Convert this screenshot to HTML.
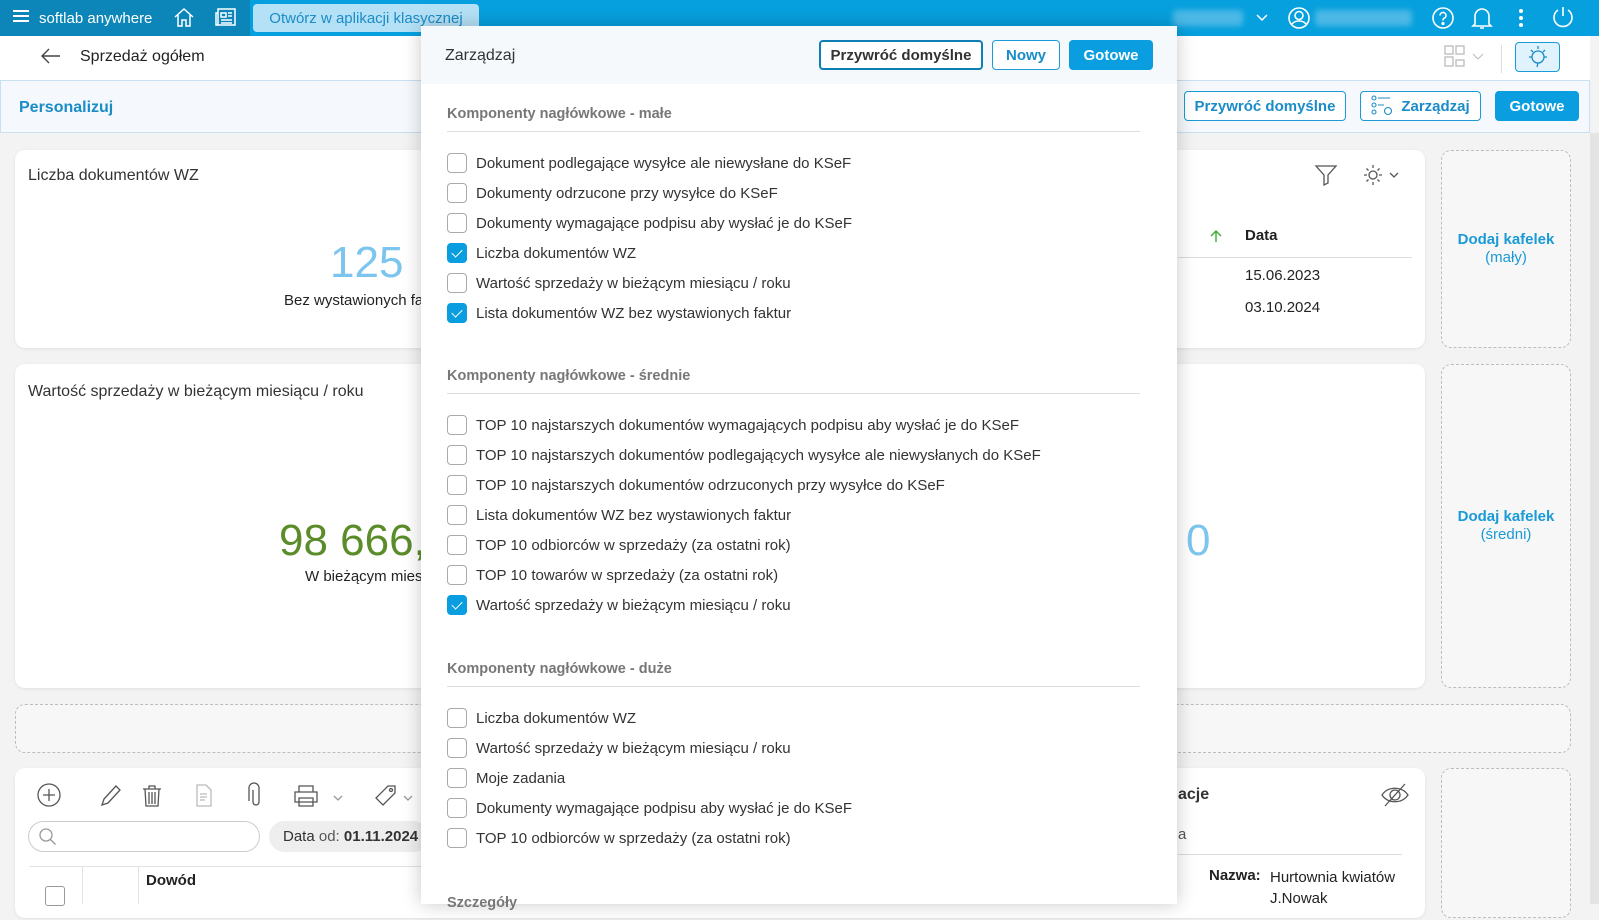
<!DOCTYPE html>
<html><head><meta charset="utf-8"><style>
*{box-sizing:border-box;margin:0;padding:0}
body{width:1599px;height:904px;overflow:hidden;position:relative;background:#f3f3f3;font-family:"Liberation Sans",sans-serif;color:#222;font-size:15px}
.a{position:absolute}
.top{left:0;top:0;width:1599px;height:36px;background:#06a0de}
.topl{left:0;top:0;width:250px;height:36px;background:#0c86b8}
.bar2{left:0;top:36px;width:1590px;height:44px;background:#fff}
.pers{left:0;top:80px;width:1590px;height:53px;background:#f5f9fd;border:1px solid #c8e0f2}
.btn{position:absolute;border:1px solid #1a9ad6;border-radius:4px;color:#1a8cc8;font-weight:bold;font-size:15px;display:flex;align-items:center;justify-content:center;background:#fff}
.btnf{background:#0a9ee0;color:#fff;border-color:#0a9ee0}
.card{position:absolute;background:#fff;border-radius:10px;box-shadow:0 1px 3px rgba(0,0,0,.08)}
.dash{position:absolute;border:1px dashed #bdbdbd;border-radius:10px;background:#f7f7f7}
.dk{color:#1a9ad6;font-weight:bold;text-align:center;font-size:15px;line-height:18px}
.modal{left:421px;top:26px;width:756px;height:878px;background:#fff;box-shadow:0 0 18px rgba(0,0,0,.22)}
.mh{left:0;top:0;width:756px;height:58px;background:#f5f9fc}
.sec{position:absolute;left:26px;width:693px;color:#777;font-weight:bold;font-size:14.5px;border-bottom:1px solid #ddd;padding-bottom:9px}
.it{position:absolute;left:26px;height:20px;display:flex;align-items:center;font-size:15px;color:#333}
.cb{width:20px;height:20px;border:1px solid #aaa;border-radius:4px;margin-right:9px;background:#fff;position:relative}
.cb.on{background:#0a9ee0;border-color:#0a9ee0}
.cb.on:after{content:"";position:absolute;left:6px;top:3px;width:5px;height:9px;border:solid #fff;border-width:0 1.5px 1.5px 0;transform:rotate(45deg)}
</style></head><body>
<div class="a top"></div><div class="a topl"></div>
<div class="a" style="left:13px;top:10px;width:16px;height:2px;background:#fff;box-shadow:0 5px 0 #fff,0 10px 0 #fff"></div>
<div class="a" style="left:39px;top:10px;color:#fff;font-size:15px">softlab anywhere</div>
<svg class="a" style="left:173px;top:6px" width="22" height="22" viewBox="0 0 22 22" fill="none" stroke="#fff" stroke-width="1.5"><path d="M2 11L11 3l9 8M5 9v11h4v-6h4v6h4V9"/></svg>
<svg class="a" style="left:215px;top:8px" width="22" height="19" viewBox="0 0 22 19" fill="none" stroke="#fff" stroke-width="1.5"><rect x="3" y="1" width="17" height="16"/><path d="M3 5H1v12h2M6 5h5v4H6zM13 5h4M13 8h4M6 12h11M6 15h11"/></svg>
<div class="a" style="left:253px;top:4px;width:226px;height:28px;background:#b5e1f6;border-radius:4px;color:#1a8cc8;font-size:15px;display:flex;align-items:center;justify-content:center">Otwórz w aplikacji klasycznej</div>
<div class="a" style="left:1173px;top:10px;width:70px;height:16px;background:#4cb8e6;border-radius:4px;filter:blur(3px)"></div>
<svg class="a" style="left:1255px;top:12px" width="14" height="10"><path d="M2 3l5 5 5-5" stroke="#fff" fill="none" stroke-width="1.5"/></svg>
<svg class="a" style="left:1287px;top:6px" width="24" height="24" fill="none" stroke="#fff" stroke-width="1.6"><circle cx="12" cy="12" r="10"/><circle cx="12" cy="9.5" r="4"/><path d="M5 18c3-4 11-4 14 0"/></svg>
<div class="a" style="left:1315px;top:10px;width:97px;height:16px;background:#4cb8e6;border-radius:4px;filter:blur(3px)"></div>
<svg class="a" style="left:1431px;top:6px" width="24" height="24" fill="none" stroke="#fff" stroke-width="1.6"><circle cx="12" cy="12" r="10"/><path d="M9 9.5a3 3 0 1 1 4 2.8c-1 .5-1 1-1 2.2"/><circle cx="12" cy="17.5" r=".8" fill="#fff"/></svg>
<svg class="a" style="left:1470px;top:5px" width="24" height="26" fill="none" stroke="#fff" stroke-width="1.6"><path d="M5 19V11a7 7 0 0 1 14 0v8l2 2H3zM10 23h4"/></svg>
<div class="a" style="left:1519px;top:9px;width:4px;height:4px;border-radius:2px;background:#fff;box-shadow:0 7px 0 #fff,0 14px 0 #fff"></div>
<svg class="a" style="left:1551px;top:5px" width="24" height="24" fill="none" stroke="#fff" stroke-width="1.6"><path d="M7 5a9 9 0 1 0 10 0M12 2v9"/></svg>

<div class="a bar2"></div>
<svg class="a" style="left:40px;top:48px" width="22" height="16" fill="none" stroke="#444" stroke-width="1.4"><path d="M20 8H2M9 1L2 8l7 7"/></svg>
<div class="a" style="left:80px;top:48px;font-size:16px;color:#222">Sprzedaż ogółem</div>
<svg class="a" style="left:1444px;top:45px" width="22" height="22" fill="none" stroke="#bbb" stroke-width="1.3"><rect x="1" y="1" width="8" height="8"/><rect x="12" y="1" width="8" height="8"/><rect x="1" y="12" width="8" height="9"/><rect x="12" y="15" width="8" height="6"/></svg>
<svg class="a" style="left:1472px;top:53px" width="12" height="8"><path d="M1 1l5 5 5-5" stroke="#bbb" fill="none"/></svg>
<div class="a" style="left:1501px;top:45px;width:1px;height:28px;background:#ddd"></div>
<div class="a" style="left:1515px;top:42px;width:45px;height:30px;background:#e0f2fc;border:1px solid #1a9ad6;border-radius:4px"></div>
<svg class="a" style="left:1525px;top:44px" width="26" height="26" fill="none" stroke="#1a8cc8" stroke-width="1.3"><circle cx="13" cy="13" r="6"/><path d="M13 19l-1 4M13 2v3M4 13h3M19 13h3M6 6l2 2M20 6l-2 2"/></svg>

<div class="a pers"></div>
<div class="a" style="left:19px;top:99px;color:#1a8cc8;font-weight:bold;font-size:16px">Personalizuj</div>
<div class="btn" style="left:1184px;top:91px;width:162px;height:30px">Przywróć domyślne</div>
<div class="btn" style="left:1360px;top:91px;width:121px;height:30px"><svg width="26" height="22" fill="none" stroke="#1a8cc8" stroke-width="1.1" style="margin-right:4px"><circle cx="3" cy="3" r="2"/><circle cx="3" cy="10" r="2"/><circle cx="3" cy="17" r="2"/><path d="M7 3h12M7 10h6"/><circle cx="17" cy="16" r="3.5"/></svg>Zarządzaj</div>
<div class="btn btnf" style="left:1495px;top:91px;width:84px;height:30px">Gotowe</div>
<div class="a" style="left:1590px;top:133px;width:9px;height:771px;background:#e4e4e4"></div>

<div class="card" style="left:15px;top:150px;width:1410px;height:198px"></div>
<div class="a" style="left:28px;top:167px;font-size:16px;color:#333">Liczba dokumentów WZ</div>
<div class="a" style="left:330px;top:238px;font-size:44px;color:#7cc5ef">125</div>
<div class="a" style="left:284px;top:292px;font-size:15px">Bez wystawionych fa</div>
<svg class="a" style="left:1314px;top:163px" width="24" height="24" fill="none" stroke="#555" stroke-width="1.3"><path d="M2 3h20l-8 9v8l-4 2V12z"/></svg>
<svg class="a" style="left:1362px;top:163px" width="40" height="24" fill="none" stroke="#555" stroke-width="1.3"><circle cx="11" cy="12" r="4"/><path d="M11 2v3M11 19v3M2 12h3M17 12h3M4.5 5.5l2 2M15.5 16.5l2 2M4.5 18.5l2-2M15.5 7.5l2-2"/><path d="M28 10l4 4 4-4"/></svg>
<svg class="a" style="left:1210px;top:229px" width="12" height="14" fill="none" stroke="#3aaa35" stroke-width="1.4"><path d="M6 13V2M1 7l5-5 5 5"/></svg>
<div class="a" style="left:1245px;top:227px;font-weight:bold;font-size:15px">Data</div>
<div class="a" style="left:1178px;top:257px;width:234px;height:1px;background:#ddd"></div>
<div class="a" style="left:1245px;top:267px">15.06.2023</div>
<div class="a" style="left:1245px;top:299px">03.10.2024</div>
<div class="dash" style="left:1441px;top:150px;width:130px;height:198px"></div>
<div class="a dk" style="left:1441px;top:231px;width:130px">Dodaj kafelek<br><span style="font-weight:normal">(mały)</span></div>

<div class="card" style="left:15px;top:364px;width:1410px;height:324px"></div>
<div class="a" style="left:28px;top:383px;font-size:16px;color:#333">Wartość sprzedaży w bieżącym miesiącu / roku</div>
<div class="a" style="left:279px;top:516px;font-size:44px;color:#5b8c2a">98 666,</div>
<div class="a" style="left:305px;top:568px">W bieżącym mies</div>
<div class="a" style="left:1186px;top:516px;font-size:44px;color:#7cc5ef">0</div>
<div class="dash" style="left:1441px;top:364px;width:130px;height:324px"></div>
<div class="a dk" style="left:1441px;top:508px;width:130px">Dodaj kafelek<br><span style="font-weight:normal">(średni)</span></div>

<div class="dash" style="left:15px;top:704px;width:1556px;height:49px"></div>

<div class="card" style="left:15px;top:768px;width:1410px;height:150px"></div>
<div class="dash" style="left:1441px;top:768px;width:130px;height:150px"></div>
<svg class="a" style="left:36px;top:782px" width="320" height="28" fill="none" stroke="#555" stroke-width="1.3"><circle cx="13" cy="13" r="11"/><path d="M13 7v12M7 13h12"/><path d="M66 23l2-6 12-13 4 4-12 13z"/><path d="M107 7h18M113 7V4h6v3M109 7l1 17h12l1-17M113 10v12M116 10v12M119 10v12"/><path stroke="#bbb" d="M161 3h9l5 5v16h-14zM164 12h7M164 15h7M164 18h5"/><path d="M217 8v12a3 3 0 0 0 6 0V6a5 5 0 0 0-10 0v13"/><path d="M259 10h22v10h-22zM263 10V4h14v6M263 16h14v8h-14z"/><path d="M298 14l4 4 4-4" stroke="#999"/></svg>
<svg class="a" style="left:374px;top:782px" width="44" height="28" fill="none" stroke="#555" stroke-width="1.3"><path d="M2 16L14 4h7v7L9 23z"/><circle cx="17" cy="8" r="1.5"/><path d="M30 14l4 4 4-4" stroke="#999"/></svg>
<div class="a" style="left:28px;top:821px;width:232px;height:31px;border:1px solid #ccc;border-radius:16px;background:#fff"></div>
<svg class="a" style="left:38px;top:827px" width="20" height="20" fill="none" stroke="#999" stroke-width="1.3"><circle cx="8" cy="8" r="6"/><path d="M12.5 12.5l5 5"/></svg>
<div class="a" style="left:269px;top:821px;width:160px;height:31px;background:#eee;border-radius:16px"></div>
<div class="a" style="left:283px;top:828px;color:#333">Data <span style="color:#555">od:</span> <b>01.11.2024</b></div>
<div class="a" style="left:29px;top:866px;width:1000px;height:1px;background:#e3e3e3"></div>
<div class="a" style="left:82px;top:866px;width:1px;height:38px;background:#e3e3e3"></div>
<div class="a" style="left:138px;top:866px;width:1px;height:38px;background:#e3e3e3"></div>
<div class="a" style="left:45px;top:886px;width:20px;height:20px;border:1px solid #999;border-radius:3px;background:#fff"></div>
<div class="a" style="left:146px;top:872px;font-weight:bold">Dowód</div>
<div class="a" style="left:1178px;top:786px;font-weight:bold;font-size:16px;color:#333">acje</div>
<svg class="a" style="left:1381px;top:782px" width="28" height="26" fill="none" stroke="#555" stroke-width="1.3"><path d="M1 13c6-9 20-9 26 0-6 9-20 9-26 0z"/><circle cx="14" cy="13" r="5"/><path d="M4 24L24 2"/></svg>
<div class="a" style="left:1178px;top:826px;color:#555">a</div>
<div class="a" style="left:1178px;top:854px;width:224px;height:1px;background:#ddd"></div>
<div class="a" style="left:1209px;top:867px;font-weight:bold">Nazwa:</div>
<div class="a" style="left:1270px;top:867px;line-height:21px">Hurtownia kwiatów<br>J.Nowak</div>

<div class="a modal">
<div class="a mh"></div>
<div class="a" style="left:24px;top:21px;font-size:16px;color:#333">Zarządzaj</div>
<div class="btn" style="left:398px;top:14px;width:164px;height:30px;border-color:#0e7fb4;color:#333;border-width:2px">Przywróć domyślne</div>
<div class="btn" style="left:571px;top:14px;width:68px;height:30px">Nowy</div>
<div class="btn btnf" style="left:648px;top:14px;width:84px;height:30px">Gotowe</div>

<div class="sec" style="top:80px">Komponenty nagłówkowe - małe</div>
<div class="it" style="top:127px"><div class="cb"></div>Dokument podlegające wysyłce ale niewysłane do KSeF</div>
<div class="it" style="top:157px"><div class="cb"></div>Dokumenty odrzucone przy wysyłce do KSeF</div>
<div class="it" style="top:187px"><div class="cb"></div>Dokumenty wymagające podpisu aby wysłać je do KSeF</div>
<div class="it" style="top:217px"><div class="cb on"></div>Liczba dokumentów WZ</div>
<div class="it" style="top:247px"><div class="cb"></div>Wartość sprzedaży w bieżącym miesiącu / roku</div>
<div class="it" style="top:277px"><div class="cb on"></div>Lista dokumentów WZ bez wystawionych faktur</div>

<div class="sec" style="top:342px">Komponenty nagłówkowe - średnie</div>
<div class="it" style="top:389px"><div class="cb"></div>TOP 10 najstarszych dokumentów wymagających podpisu aby wysłać je do KSeF</div>
<div class="it" style="top:419px"><div class="cb"></div>TOP 10 najstarszych dokumentów podlegających wysyłce ale niewysłanych do KSeF</div>
<div class="it" style="top:449px"><div class="cb"></div>TOP 10 najstarszych dokumentów odrzuconych przy wysyłce do KSeF</div>
<div class="it" style="top:479px"><div class="cb"></div>Lista dokumentów WZ bez wystawionych faktur</div>
<div class="it" style="top:509px"><div class="cb"></div>TOP 10 odbiorców w sprzedaży (za ostatni rok)</div>
<div class="it" style="top:539px"><div class="cb"></div>TOP 10 towarów w sprzedaży (za ostatni rok)</div>
<div class="it" style="top:569px"><div class="cb on"></div>Wartość sprzedaży w bieżącym miesiącu / roku</div>

<div class="sec" style="top:635px">Komponenty nagłówkowe - duże</div>
<div class="it" style="top:682px"><div class="cb"></div>Liczba dokumentów WZ</div>
<div class="it" style="top:712px"><div class="cb"></div>Wartość sprzedaży w bieżącym miesiącu / roku</div>
<div class="it" style="top:742px"><div class="cb"></div>Moje zadania</div>
<div class="it" style="top:772px"><div class="cb"></div>Dokumenty wymagające podpisu aby wysłać je do KSeF</div>
<div class="it" style="top:802px"><div class="cb"></div>TOP 10 odbiorców w sprzedaży (za ostatni rok)</div>
<div class="sec" style="top:869px;border:none">Szczegóły</div>
</div>
</body></html>
